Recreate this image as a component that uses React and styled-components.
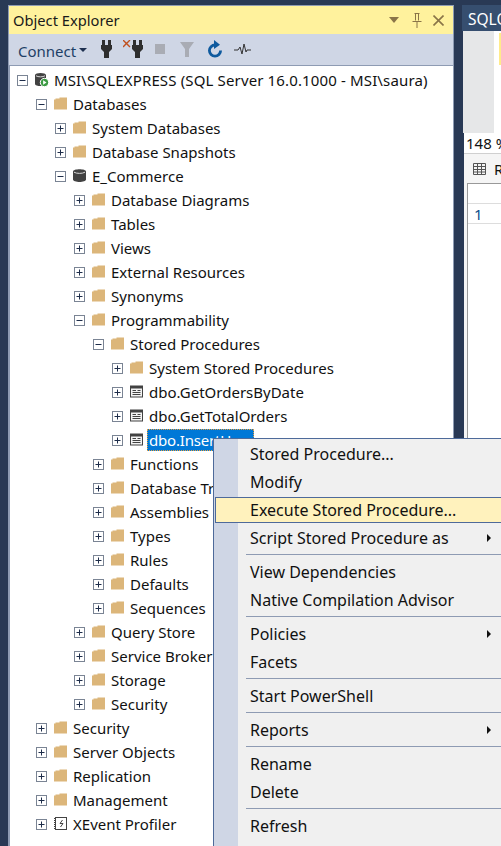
import React from "react";
import styled, { createGlobalStyle } from "styled-components";

const Global = createGlobalStyle`
  html, body { margin: 0; padding: 0; background: #293955; }
  #root { width: 501px; height: 846px; }
`;

const Page = styled.div`
  position: relative;
  width: 501px;
  height: 846px;
  overflow: hidden;
  display: flex;
  align-items: flex-start;
  gap: 8px;
  padding: 5px 0 0 8px;
  box-sizing: border-box;
  background: #293955;
  font-family: "Noto Sans", "Open Sans", sans-serif;
  font-size: 15px;
  color: #111;
`;

const Panel = styled.section`
  flex: 0 0 446px;
  height: 841px;
  display: flex;
  flex-direction: column;
  box-sizing: border-box;
  border: 1px solid #8e9bb3;
  border-bottom: 0;
`;

const TitleBar = styled.header`
  flex: 0 0 28px;
  display: flex;
  align-items: center;
  padding: 0 9px 0 4px;
  background: #fff29d;
  color: #1a1a1a;
`;

const TitleText = styled.span`
  flex: 1;
  font-size: 14.7px;
`;

const TitleIcon = styled.svg`
  flex: none;
  margin-left: ${(p) => p.$gap}px;
`;

const Toolbar = styled.div`
  flex: 0 0 32px;
  display: flex;
  align-items: center;
  padding: 2px 0 0 9px;
  box-sizing: border-box;
  background: #cfd6e5;
  border-bottom: 1px solid #8e9bb3;
`;

const ConnectLabel = styled.span`
  color: #1e3f66;
`;

const Caret = styled.span`
  width: 0;
  height: 0;
  margin: 0 0 2px 3px;
  border-left: 4px solid transparent;
  border-right: 4px solid transparent;
  border-top: 4px solid #1e3050;
`;

const ToolIcon = styled.svg`
  margin: 0 0 3px ${(p) => p.$gap}px;
  flex: none;
`;

const Tree = styled.div`
  flex: 1;
  background: #fff;
  border-left: 1px solid #8e9bb3;
  padding: 2px 0 0 7px;
  overflow: hidden;
`;

const Row = styled.div`
  height: 24px;
  display: flex;
  align-items: center;
  padding-left: ${(p) => p.$depth * 19}px;
  white-space: nowrap;
`;

const Expander = styled.svg`
  flex: none;
  width: 11px;
  height: 11px;
`;

const NodeIcon = styled.svg`
  flex: none;
  margin: 0 0 1px 6px;
  width: 15px;
  height: 15px;
`;

const Label = styled.span`
  margin-left: ${(p) => (p.$selected ? 3 : 5)}px;
  padding: ${(p) => (p.$selected ? "0 2px" : "0")};
  line-height: ${(p) => (p.$selected ? "22px" : "24px")};
  letter-spacing: ${(p) => (p.$selected ? "-0.2px" : p.$wide ? "0.14px" : "0")};
  background: ${(p) => (p.$selected ? "#0078d7" : "transparent")};
  color: ${(p) => (p.$selected ? "#fff" : "inherit")};
  outline: ${(p) => (p.$selected ? "1px dotted #e8a040" : "none")};
  outline-offset: -1px;
`;

const Side = styled.section`
  flex: 1;
  min-width: 0;
  height: 841px;
  display: flex;
  flex-direction: column;
`;

const DocTab = styled.div`
  flex: 0 0 26px;
  padding: 4px 0 0 6px;
  box-sizing: border-box;
  background: #364e6f;
  color: #fff;
  font-size: 15.5px;
  line-height: 21px;
  overflow: hidden;
  white-space: nowrap;
`;

const Editor = styled.div`
  flex: 0 0 102px;
  margin-left: 1px;
  display: flex;
  align-items: flex-start;
  background: #fff;
`;

const EditorMargin = styled.div`
  flex: 0 0 31px;
  align-self: stretch;
  background: #e6e7e8;
`;

const ChangeMark = styled.div`
  flex: 0 0 2px;
  height: 32px;
  margin: 2px 0 0 5px;
  background: #ffeb8a;
`;

const ZoomBar = styled.div`
  flex: 0 0 20px;
  margin-left: 2px;
  padding-left: 2px;
  background: #fff;
  line-height: 20px;
  white-space: nowrap;
  overflow: hidden;
`;

const Results = styled.div`
  flex: 1;
  margin-left: 2px;
  background: #f5f5f5;
  border-top: 1px solid #d0d0d0;
`;

const ResultTab = styled.div`
  height: 29px;
  display: flex;
  align-items: center;
  gap: 8px;
  padding-left: 9px;
  white-space: nowrap;
  overflow: hidden;
`;

const GridGlyph = styled.svg`
  flex: none;
`;

const Grid = styled.div`
  height: 100%;
  margin-left: 3px;
  background: #fff;
  border-left: 1px solid #999;
  border-top: 1px solid #999;
`;

const GridRow = styled.div`
  height: 19px;
  border-bottom: 1px solid #ddd;
  padding-left: 6px;
  line-height: 20px;
  color: #0b4f8a;
`;

const Menu = styled.nav`
  position: absolute;
  left: 213px;
  top: 438px;
  width: 300px;
  height: 420px;
  box-sizing: border-box;
  padding: 1px 0 0 1px;
  background: linear-gradient(to right, #cfd6e5 24px, #f0f0f0 24px);
  border: 1px solid #4e6a9a;
  font-size: 16px;
`;

const MenuItem = styled.div`
  position: relative;
  height: 28px;
  width: 290px;
  display: flex;
  align-items: center;
  box-sizing: border-box;
  padding-left: 35px;
  color: #111;
  ${(p) =>
    p.$active &&
    `
    height: 26px;
    margin: 1px 0;
    background: #fff2bd;
    border: 1px solid #4e6a9a;
    padding-left: 34px;
  `}
`;

const SubArrow = styled.span`
  position: absolute;
  left: 272px;
  top: 10px;
  width: 0;
  height: 0;
  border-top: 4px solid transparent;
  border-bottom: 4px solid transparent;
  border-left: 4px solid #111;
`;

const Separator = styled.div`
  height: 1px;
  margin: 2px 0 3px 31px;
  background: #8e9bb3;
`;

const Plus = () => (
  <Expander viewBox="0 0 11 11">
    <rect x=".5" y=".5" width="10" height="10" fill="#fff" stroke="#7a8494" />
    <path d="M2.5 5.5h6M5.5 2.5v6" stroke="#1e2d4a" />
  </Expander>
);

const Minus = () => (
  <Expander viewBox="0 0 11 11">
    <rect x=".5" y=".5" width="10" height="10" fill="#fff" stroke="#7a8494" />
    <path d="M2.5 5.5h6" stroke="#1e2d4a" />
  </Expander>
);

const Folder = () => (
  <NodeIcon viewBox="0 0 15 15">
    <path d="M1 3.5h1.5V2.5h4V1.5H14V13.5H1z" fill="#dcb67a" />
  </NodeIcon>
);

const Proc = () => (
  <NodeIcon viewBox="0 0 15 15">
    <rect x="1" y="1.5" width="13" height="12" fill="#424242" />
    <rect x="2" y="4.5" width="11" height="8" fill="#f2f2f2" />
    <path d="M3.5 6.5h3.5M3.5 8.5h8M3.5 10.5h8M8.5 6.5h3" stroke="#424242" />
  </NodeIcon>
);

const Db = () => (
  <NodeIcon viewBox="0 0 15 15">
    <path d="M1 3.5C1 .5 14 .5 14 3.5v8C14 14.8 1 14.8 1 11.5z" fill="#424242" />
    <path d="M2 4.2c2.5 1.6 8.5 1.6 11 0" stroke="#d8d8d8" fill="none" />
  </NodeIcon>
);

const Server = () => (
  <NodeIcon viewBox="0 0 15 15">
    <path d="M1 3C1 .3 12 .3 12 3v9C12 14.7 1 14.7 1 12z" fill="#424242" />
    <path d="M2 3.8c2 1.4 7 1.4 9 0" stroke="#d8d8d8" fill="none" />
    <circle cx="10.5" cy="10.5" r="4.2" fill="#3a9a42" stroke="#fff" />
    <path d="M9.1 8.2l3.4 2.3-3.4 2.3z" fill="#fff" />
  </NodeIcon>
);

const Profiler = () => (
  <NodeIcon viewBox="0 0 15 15">
    <rect x="2.5" y="1.5" width="11" height="12" fill="#fff" stroke="#444" />
    <path d="M1.5 2v11" stroke="#444" strokeDasharray="1 1" />
    <path d="M9.5 4L7 7.5h3L7.5 11" stroke="#444" fill="none" />
  </NodeIcon>
);

const icons = { f: Folder, p: Proc, d: Db, s: Server, x: Profiler };

const treeRows = [
  [0, "-", "s", "MSI\\SQLEXPRESS (SQL Server 16.0.1000 - MSI\\saura)"],
  [1, "-", "f", "Databases"],
  [2, "+", "f", "System Databases"],
  [2, "+", "f", "Database Snapshots"],
  [2, "-", "d", "E_Commerce"],
  [3, "+", "f", "Database Diagrams"],
  [3, "+", "f", "Tables"],
  [3, "+", "f", "Views"],
  [3, "+", "f", "External Resources"],
  [3, "+", "f", "Synonyms"],
  [3, "-", "f", "Programmability"],
  [4, "-", "f", "Stored Procedures"],
  [5, "+", "f", "System Stored Procedures"],
  [5, "+", "p", "dbo.GetOrdersByDate"],
  [5, "+", "p", "dbo.GetTotalOrders"],
  [5, "+", "p", "dbo.InsertUser", true],
  [4, "+", "f", "Functions"],
  [4, "+", "f", "Database Triggers"],
  [4, "+", "f", "Assemblies"],
  [4, "+", "f", "Types"],
  [4, "+", "f", "Rules"],
  [4, "+", "f", "Defaults"],
  [4, "+", "f", "Sequences"],
  [3, "+", "f", "Query Store"],
  [3, "+", "f", "Service Broker"],
  [3, "+", "f", "Storage"],
  [3, "+", "f", "Security"],
  [1, "+", "f", "Security"],
  [1, "+", "f", "Server Objects"],
  [1, "+", "f", "Replication"],
  [1, "+", "f", "Management"],
  [1, "+", "x", "XEvent Profiler"],
];

const menu = [
  ["Stored Procedure..."],
  ["Modify"],
  ["Execute Stored Procedure...", "active"],
  ["Script Stored Procedure as", "sub"],
  null,
  ["View Dependencies"],
  ["Native Compilation Advisor"],
  null,
  ["Policies", "sub"],
  ["Facets"],
  null,
  ["Start PowerShell"],
  null,
  ["Reports", "sub"],
  null,
  ["Rename"],
  ["Delete"],
  null,
  ["Refresh"],
];

export default function App() {
  return (
    <Page>
      <Global />
      <Panel>
        <TitleBar>
          <TitleText>Object Explorer</TitleText>
          <TitleIcon $gap={0} width="10" height="6" viewBox="0 0 10 6"><path d="M0 0h10L5 6z" fill="#8a7548" /></TitleIcon>
          <TitleIcon $gap={13} width="10" height="15" viewBox="0 0 10 15"><path d="M2.5.5h5M3.5.5v7M6.5.5v7M.5 8.5h9M5 9v6" stroke="#8a7548" fill="none" /></TitleIcon>
          <TitleIcon $gap={11} width="11" height="11" viewBox="0 0 11 11"><path d="M.5.5l10 10M10.5.5l-10 10" stroke="#8a7548" strokeWidth="1.6" /></TitleIcon>
        </TitleBar>
        <Toolbar>
          <ConnectLabel>Connect</ConnectLabel>
          <Caret />
          <ToolIcon $gap={14} width="11" height="18" viewBox="0 0 11 18"><path d="M1 0h3v5h3V0h3v5h1v4l-3 3v6H3v-6L0 9V5h1z" fill="#2e2e2e" /></ToolIcon>
          <ToolIcon $gap={11} width="20" height="18" viewBox="0 0 20 18"><path d="M10 0h3v5h3V0h3v5h1v4l-3 3v6h-5v-6l-3-3V5h1z" fill="#2e2e2e" /><path d="M0 0l7 7M7 0L0 7" stroke="#c0501e" strokeWidth="1.4" /></ToolIcon>
          <ToolIcon $gap={12} width="10" height="10" viewBox="0 0 10 10"><rect width="10" height="10" fill="#a9acb4" /></ToolIcon>
          <ToolIcon $gap={15} width="14" height="15" viewBox="0 0 14 15"><path d="M0 0h14L9 7v8H5V7z" fill="#a9acb4" /></ToolIcon>
          <ToolIcon $gap={13} width="16" height="18" viewBox="0 0 16 18"><path d="M8 5a5.6 5.6 0 1 0 5.6 5.6" stroke="#0e5a9e" strokeWidth="2.8" fill="none" /><path d="M7 0l6 4.8-6 4.2z" fill="#0e5a9e" /></ToolIcon>
          <ToolIcon $gap={11} width="17" height="12" viewBox="0 0 17 12"><path d="M0 7h4l2-3 2 7 2-10 2 8 1-2h4" stroke="#333" fill="none" /></ToolIcon>
        </Toolbar>
        <Tree>
          {treeRows.map(([depth, exp, icon, text, selected], i) => {
            const Icon = icons[icon];
            return (
              <Row key={i} $depth={depth}>
                {exp === "+" ? <Plus /> : <Minus />}
                <Icon />
                <Label $selected={selected} $wide={depth === 0}>{text}</Label>
              </Row>
            );
          })}
        </Tree>
      </Panel>
      <Side>
        <DocTab>SQLQuery1.sql</DocTab>
        <Editor><EditorMargin /><ChangeMark /></Editor>
        <ZoomBar>148 %</ZoomBar>
        <Results>
          <ResultTab>
            <GridGlyph width="13" height="12" viewBox="0 0 13 12"><path d="M.5.5h12v11H.5zM.5 3.5h12M.5 6.5h12M.5 9h12M4.5.5v11M8.5.5v11" stroke="#555" fill="none" /></GridGlyph>
            <span>Results</span>
          </ResultTab>
          <Grid>
            <GridRow />
            <GridRow>1</GridRow>
          </Grid>
        </Results>
      </Side>
      <Menu>
        {menu.map((m, i) =>
          m ? (
            <MenuItem key={i} $active={m[1] === "active"}>
              {m[0]}
              {m[1] === "sub" && <SubArrow />}
            </MenuItem>
          ) : (
            <Separator key={i} />
          )
        )}
      </Menu>
    </Page>
  );
}
